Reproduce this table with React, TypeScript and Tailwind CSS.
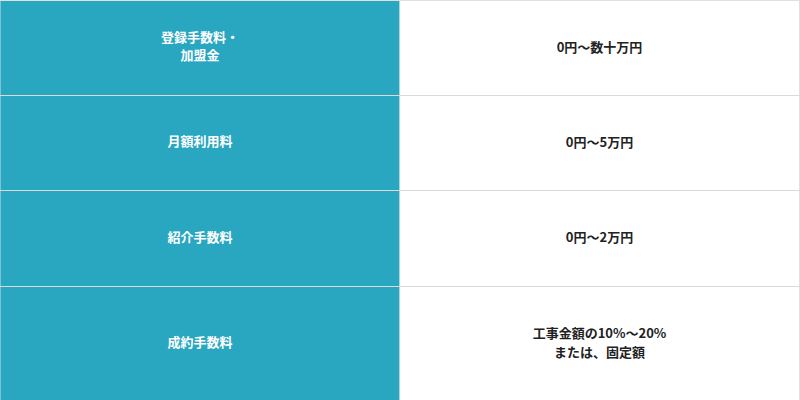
const rows = [
  { label: ['登録手数料・', '加盟金'], value: ['0円〜数十万円'], h: 'h-[95px]' },
  { label: ['月額利用料'], value: ['0円〜5万円'], h: 'h-[95px]' },
  { label: ['紹介手数料'], value: ['0円〜2万円'], h: 'h-[96px]' },
  { label: ['成約手数料'], value: ['工事金額の10%〜20%', 'または、固定額'], h: 'h-[114px]' },
]

export default function App() {
  return (
    <div className="w-[800px] h-[400px] bg-white" style={{ fontFamily: '"Noto Sans CJK JP", "Noto Sans", sans-serif' }}>
      <div className="flex flex-col border-t border-[#e0e0e0]">
        {rows.map((r, i) => (
          <div key={i} className={`flex ${r.h} border-b border-[#dadada]`}>
            <div className="flex w-[400px] flex-col items-center justify-center border-l border-r border-l-[#7cc3d3] border-r-[#a9d8e3] bg-[#29a7c1] pb-1 text-[13px] leading-[18px] font-bold text-white">
              {r.label.map((t) => (
                <span key={t}>{t}</span>
              ))}
            </div>
            <div className="flex flex-1 flex-col items-center justify-center border-r border-[#e0e0e0] pb-1 text-[13px] leading-[19px] font-bold text-[#222]">
              {r.value.map((t) => (
                <span key={t}>{t}</span>
              ))}
            </div>
          </div>
        ))}
      </div>
    </div>
  )
}
